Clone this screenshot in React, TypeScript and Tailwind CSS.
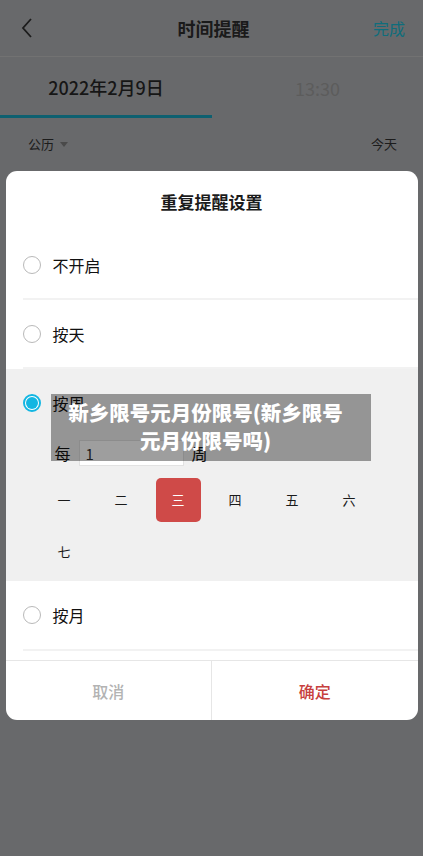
import React, { useState } from 'react';

const days = ['一', '二', '三', '四', '五', '六', '七'];

const Radio = ({ checked }: { checked: boolean }) =>
  checked ? (
    <span className="flex h-[18px] w-[18px] items-center justify-center rounded-full border-2 border-[#12b6e2] bg-white">
      <span className="h-[12px] w-[12px] rounded-full bg-[#12b6e2]"></span>
    </span>
  ) : (
    <span className="block h-[18px] w-[18px] rounded-full border border-[#b9b9b9] bg-white"></span>
  );

const OptionRow = ({ label, checked, onClick, h = 'h-[68px]' }: { label: string; checked: boolean; onClick: () => void; h?: string }) => (
  <div onClick={onClick} className={`ml-[17px] flex items-center border-b-2 border-[#f2f2f2] ${h}`}>
    <Radio checked={checked} />
    <span className="ml-[12px] text-[16px] text-[#111]">{label}</span>
  </div>
);

export default function App() {
  const [mode, setMode] = useState('week');
  const [day, setDay] = useState(2);

  return (
    <div className="relative h-[856px] w-[423px] overflow-hidden bg-[#68696b] font-['Noto_Sans_CJK_SC',sans-serif]">
      <header className="flex h-[57px] items-center justify-between border-b border-[#727272] px-[18px]">
        <svg width="14" height="22" viewBox="0 0 14 22" className="ml-[2px]">
          <path d="M11 2 L3 11 L11 20" stroke="#1c1c1c" strokeWidth="1.8" fill="none" />
        </svg>
        <h1 className="pl-[20px] text-[18px] font-bold text-[#1a1a1a]">时间提醒</h1>
        <span className="text-[16px] text-[#0f6d7c]">完成</span>
      </header>

      <div className="flex h-[61px]">
        <div className="flex w-[212px] items-center justify-center border-b-[3px] border-[#0e6070] pt-[2px] text-[18px] font-medium text-[#161616]">
          2022年2月9日
        </div>
        <div className="flex flex-1 items-center justify-center pt-[2px] text-[18px] text-[#5c5c5c]">
          13:30
        </div>
      </div>

      <div className="flex h-[52px] items-center justify-between pl-[28px] pr-[26px] text-[13px] text-[#1c1c1c]">
        <span className="flex items-center gap-[6px]">
          公历
          <svg width="8" height="5" viewBox="0 0 8 5">
            <path d="M0 0 H8 L4 5 Z" fill="#4a4a4a" />
          </svg>
        </span>
        <span>今天</span>
      </div>

      <div className="absolute inset-0 flex justify-center pt-[171px]">
        <div className="flex h-[549px] w-[412px] flex-col overflow-hidden rounded-[11px] bg-white">
          <div className="flex h-[61px] shrink-0 items-center justify-center text-[17px] font-bold text-[#1b1b1b]">
            重复提醒设置
          </div>

          <OptionRow label="不开启" checked={mode === 'off'} onClick={() => setMode('off')} />
          <OptionRow label="按天" checked={mode === 'day'} onClick={() => setMode('day')} h="h-[69px]" />

          <div className="relative h-[212px] shrink-0 bg-[#f0f0f0]">
            <div onClick={() => setMode('week')} className="flex h-[68px] items-center pl-[17px]">
              <Radio checked={mode === 'week'} />
              <span className="ml-[12px] text-[16px] text-[#111]">按周</span>
            </div>
            <div className="mt-[2px] flex h-[28px] items-center pl-[49px] text-[16px] text-[#111]">
              <span>每</span>
              <input
                defaultValue="1"
                className="ml-[8px] h-[26px] w-[105px] border border-[#e2e2e2] bg-white px-[6px] text-[15px] text-[#333] outline-none"
              />
              <span className="ml-[8px]">周</span>
            </div>
            <div className="ml-[30px] mt-[11px] grid w-[342px] grid-cols-6 gap-y-[8px]">
              {days.map((d, i) => (
                <div key={d} className="flex h-[44px] items-center justify-center">
                  <button
                    onClick={() => setDay(i)}
                    className={`flex h-[44px] w-[45px] items-center justify-center rounded-[5px] text-[13px] ${
                      day === i ? 'bg-[#cf4a48] text-white' : 'text-[#1a1a1a]'
                    }`}
                  >
                    {d}
                  </button>
                </div>
              ))}
            </div>

            <div className="absolute left-[45px] top-[25px] flex h-[67px] w-[320px] flex-col items-center justify-center bg-black/[0.38] pb-[4px] pr-[10px] text-center text-[20.5px] font-black leading-[28px] text-white">
              <span>新乡限号元月份限号(新乡限号</span>
              <span>元月份限号吗)</span>
            </div>
          </div>

          <OptionRow label="按月" checked={mode === 'month'} onClick={() => setMode('month')} h="h-[70px]" />

          <div className="mt-[9px] flex flex-1 border-t border-[#e6e6e6]">
            <button className="flex flex-1 items-center justify-center border-r border-[#e6e6e6] text-[16px] font-medium text-[#b3b3b3]">
              取消
            </button>
            <button className="flex flex-1 items-center justify-center text-[16px] font-medium text-[#c7403e]">
              确定
            </button>
          </div>
        </div>
      </div>
    </div>
  );
}
